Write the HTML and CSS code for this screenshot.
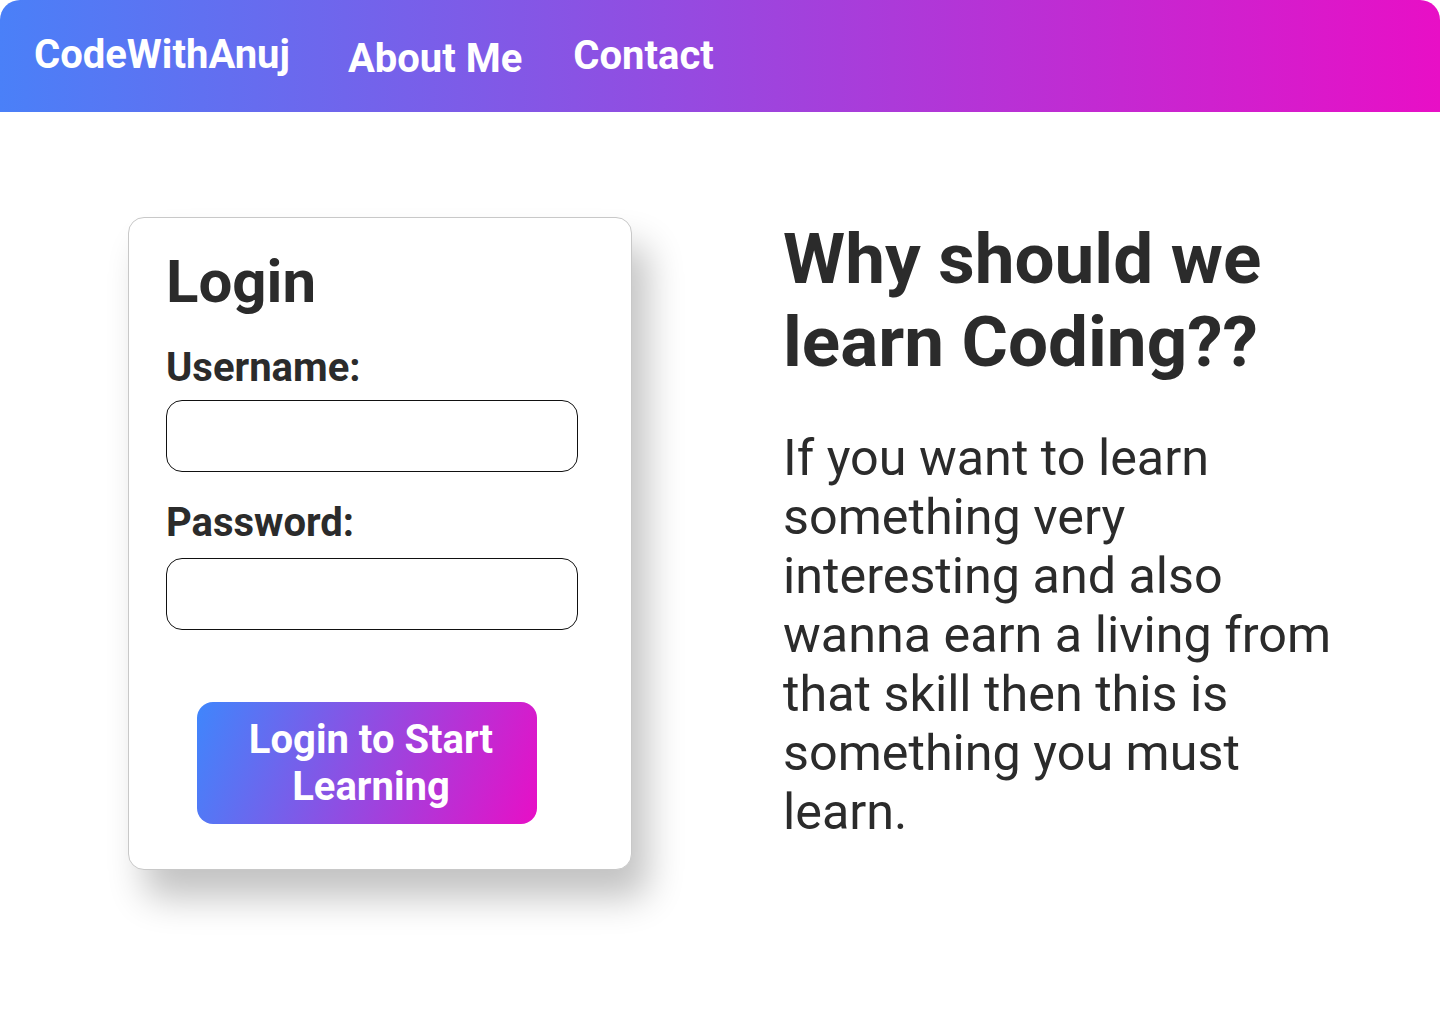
FILE: index.html
```html
<!DOCTYPE html>
<html lang="en">
<head>
<meta charset="utf-8">
<title>CodeWithAnuj</title>
<link rel="stylesheet" href="styles.css">
</head>
<body>
<header class="topbar">
  <nav class="nav">
    <a class="nav-brand" href="#">CodeWithAnuj</a>
    <a class="nav-link nav-about" href="#">About Me</a>
    <a class="nav-link nav-contact" href="#">Contact</a>
  </nav>
</header>
<main class="main">
  <section class="card">
    <h2 class="card-title">Login</h2>
    <form class="form">
      <label class="label" for="user">Username:</label>
      <input class="field" id="user" type="text">
      <label class="label label-pass" for="pass">Password:</label>
      <input class="field field-pass" id="pass" type="password">
      <button class="btn" type="button">Login to Start Learning</button>
    </form>
  </section>
  <section class="why">
    <h1 class="why-title">Why should we learn Coding??</h1>
    <p class="why-text">If you want to learn something very interesting and also wanna earn a living from that skill then this is something you must learn.</p>
  </section>
</main>
</body>
</html>
```
FILE: styles.css
```css
* { box-sizing: border-box; }
html, body { margin: 0; padding: 0; background: #fff; }
body { font-family: Roboto, "Noto Sans", sans-serif; color: #2b2b2b; min-height: 1024px; }

.topbar {
  height: 112px;
  border-radius: 20px 20px 0 0;
  background: linear-gradient(90deg, #4a80f8 0%, #e80fc6 100%);
}
.nav { display: flex; align-items: flex-start; height: 100%; padding-left: 34px; }
.nav a { color: #fff; text-decoration: none; font-weight: 700; font-size: 40px; line-height: 47px; }
.nav-brand { margin-right: 58px; margin-top: 31px; }
.nav-about { margin-right: 51px; margin-top: 35px; }
.nav-contact { margin-top: 32px; }

.main { display: flex; align-items: flex-start; padding: 105px 0 120px 128px; gap: 151px; }

.card {
  flex: none;
  width: 504px; height: 653px;
  border: 1px solid #c8c8c8; border-radius: 16px;
  background: #fff;
  box-shadow: 16px 28px 36px rgba(0,0,0,0.24);
  padding: 28px 0 0 37px;
}
.card-title { margin: 0; font-size: 60px; font-weight: 700; line-height: 72px; }
.form { display: flex; flex-direction: column; align-items: flex-start; }
.label { font-size: 40px; font-weight: 700; line-height: 48px; margin-top: 26px; }
.label-pass { margin-top: 27px; }
.field {
  width: 412px; height: 72px; margin-top: 8px;
  border: 1px solid #111; border-radius: 16px; background: #fff;
}
.field-pass { margin-top: 11px; }
.btn {
  margin: 72px 0 0 31px;
  width: 340px; height: 122px;
  border: none; border-radius: 16px;
  background: linear-gradient(110deg, #3f86fc 0%, #e80fc6 100%);
  color: #fff; font-family: Roboto, sans-serif; font-weight: 700; font-size: 40px; line-height: 47px;
  padding: 0 26px 0 34px;
}

.why { width: 570px; }
.why-title { margin: 0; font-size: 71px; font-weight: 700; line-height: 83px; }
.why-text { margin: 45px 0 0; font-size: 50.3px; font-weight: 400; line-height: 59px; }
```
